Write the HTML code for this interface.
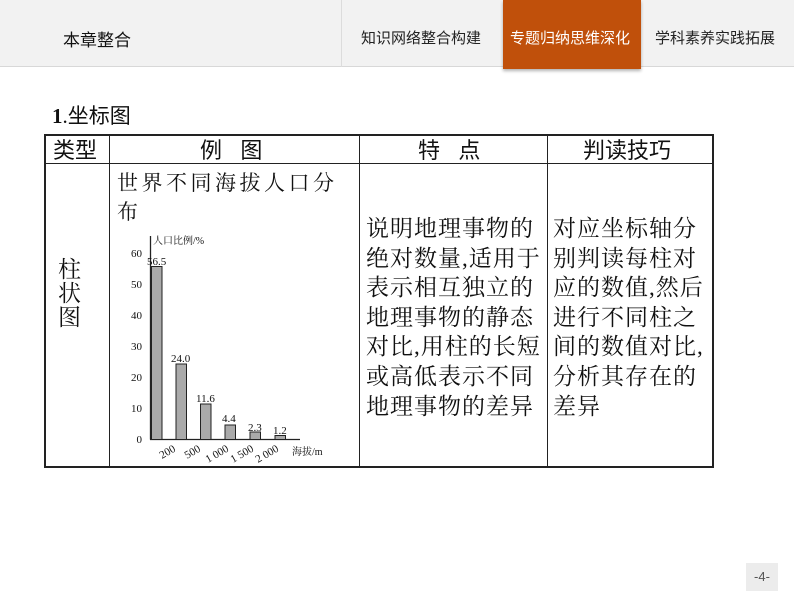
<!DOCTYPE html>
<html><head><meta charset="utf-8"><style>
*{margin:0;padding:0;box-sizing:border-box}
body{width:794px;height:596px;background:#fff;position:relative;overflow:hidden;font-family:"Liberation Sans","Noto Sans CJK SC",sans-serif;color:#111}
.a{position:absolute;white-space:nowrap}
.hdr{position:absolute;left:0;top:0;width:794px;height:67px;background:#f2f2f2;border-bottom:1px solid #d8d8d8}
.line{position:absolute;background:#222}
.cell{font-family:"Liberation Serif","Noto Serif CJK SC",serif;font-size:23px;line-height:29.6px;letter-spacing:1px}
.hd{font-family:"Liberation Sans","Noto Sans CJK SC",sans-serif;font-size:22px}
</style></head><body>
<div class="hdr"></div>
<div class="a" style="left:341px;top:0;width:1px;height:67px;background:#dcdcdc"></div>
<div class="a" style="left:503px;top:0;width:138px;height:69px;background:#c0500b;box-shadow:0 2px 3px rgba(0,0,0,.3)"></div>
<div class="a" style="left:63px;top:26px;font-size:17px">本章整合</div>
<div class="a" style="left:361px;top:27px;font-size:15px;color:#222">知识网络整合构建</div>
<div class="a" style="left:510px;top:27px;font-size:15px;color:#fff">专题归纳思维深化</div>
<div class="a" style="left:655px;top:27px;font-size:15px;color:#222">学科素养实践拓展</div>

<div class="a" style="left:52px;top:100px;font-size:21px;font-family:'Liberation Serif','Noto Sans CJK SC',serif"><b>1</b>.坐标图</div>

<div class="line" style="left:44px;top:134px;width:670px;height:2px"></div>
<div class="line" style="left:44px;top:163px;width:670px;height:1px"></div>
<div class="line" style="left:44px;top:466px;width:670px;height:2px"></div>
<div class="line" style="left:44px;top:134px;width:2px;height:334px"></div>
<div class="line" style="left:109px;top:134px;width:1px;height:334px"></div>
<div class="line" style="left:359px;top:134px;width:1px;height:334px"></div>
<div class="line" style="left:547px;top:134px;width:1px;height:334px"></div>
<div class="line" style="left:712px;top:134px;width:2px;height:334px"></div>

<div class="a hd" style="left:53px;top:133px">类型</div>
<div class="a hd" style="left:200px;top:133px">例&nbsp;&nbsp;&nbsp;图</div>
<div class="a hd" style="left:418px;top:133px">特&nbsp;&nbsp;&nbsp;点</div>
<div class="a hd" style="left:583px;top:133px">判读技巧</div>

<div class="a cell" style="left:58px;top:258px;line-height:24px;font-size:23px">柱<br>状<br>图</div>
<div class="a" style="left:117px;top:168px;font-size:21px;line-height:29px;letter-spacing:3.5px;font-family:'Noto Serif CJK SC',serif">世界不同海拔人口分<br>布</div>
<div class="a cell" style="left:366px;top:214px">说明地理事物的<br>绝对数量,适用于<br>表示相互独立的<br>地理事物的静态<br>对比,用柱的长短<br>或高低表示不同<br>地理事物的差异</div>
<div class="a cell" style="left:553px;top:214px">对应坐标轴分<br>别判读每柱对<br>应的数值,然后<br>进行不同柱之<br>间的数值对比,<br>分析其存在的<br>差异</div>

<svg class="a" style="left:0;top:0" width="794" height="596">
<g font-family="Liberation Serif,Noto Serif CJK SC,serif" font-size="11" fill="#111">
<line x1="150.5" y1="236" x2="150.5" y2="439.5" stroke="#222" stroke-width="1.3"/>
<line x1="150" y1="439.5" x2="300" y2="439.5" stroke="#222" stroke-width="1.3"/>
<text x="142" y="257" text-anchor="end">60</text>
<text x="142" y="288" text-anchor="end">50</text>
<text x="142" y="319" text-anchor="end">40</text>
<text x="142" y="350" text-anchor="end">30</text>
<text x="142" y="381" text-anchor="end">20</text>
<text x="142" y="412" text-anchor="end">10</text>
<text x="142" y="443" text-anchor="end">0</text>
<text x="153" y="244" font-size="10">人口比例/%</text>
<g fill="#aaa" stroke="#222" stroke-width="1">
<rect x="151.5" y="266.5" width="10.5" height="173"/>
<rect x="176" y="364" width="10.5" height="75.5"/>
<rect x="200.5" y="404" width="10.5" height="35.5"/>
<rect x="225" y="425" width="10.5" height="14.5"/>
<rect x="250" y="432" width="10.5" height="7.5"/>
<rect x="275" y="435.5" width="10.5" height="4"/>
</g>
<text x="147" y="265">56.5</text>
<text x="171" y="362">24.0</text>
<text x="196" y="402">11.6</text>
<text x="222" y="422">4.4</text>
<text x="248" y="431">2.3</text>
<text x="273" y="434">1.2</text>
<text transform="translate(162,459) rotate(-30)">200</text>
<text transform="translate(187,459) rotate(-30)">500</text>
<text transform="translate(208,463) rotate(-30)">1 000</text>
<text transform="translate(233,463) rotate(-30)">1 500</text>
<text transform="translate(258,463) rotate(-30)">2 000</text>
<text x="292" y="455" font-size="10">海拔/m</text>
</g>
</svg>

<div class="a" style="left:746px;top:563px;width:32px;height:28px;background:#ececec;font-size:13px;color:#555;text-align:center;line-height:28px">-4-</div>
</body></html>
